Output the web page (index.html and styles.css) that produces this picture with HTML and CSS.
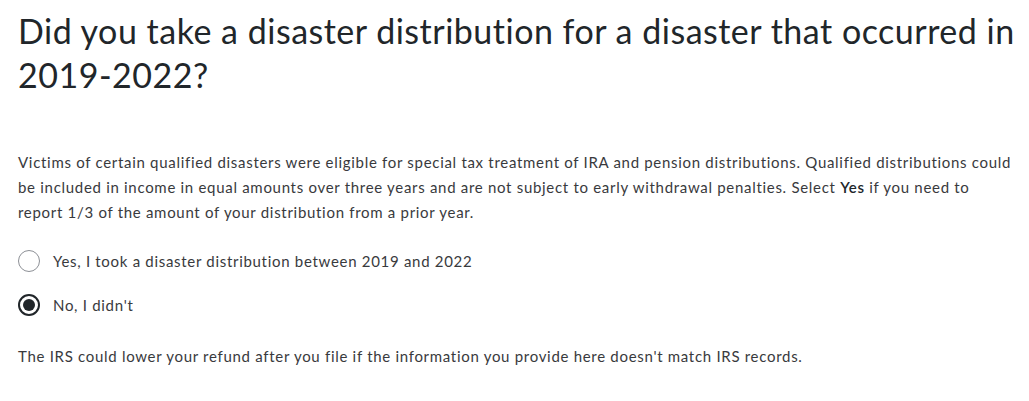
FILE: index.html
```html
<!DOCTYPE html>
<html lang="en">
<head>
    <meta charset="UTF-8">
    <meta name="viewport" content="width=device-width, initial-scale=1.0">
    <title>Disaster distribution</title>
    <link rel="stylesheet" href="styles.css">
</head>
<body>
    <div class="container">
        <h1>Did you take a disaster distribution for a disaster that occurred in 2019-2022?</h1>
        <p class="intro">Victims of certain qualified disasters were eligible for special tax treatment of IRA and pension distributions. Qualified distributions could be included in income in equal amounts over three years and are not subject to early withdrawal penalties. Select <b class="em">Yes</b> if you need to report 1/3 of the amount of your distribution from a prior year.</p>

        <div class="options">
            <label class="option">
                <input type="radio" name="disaster" value="yes">
                <span class="radio"></span>
                <span>Yes, I took a disaster distribution between 2019 and 2022</span>
            </label>
            <label class="option">
                <input type="radio" name="disaster" value="no" checked>
                <span class="radio"></span>
                <span>No, I didn't</span>
            </label>
        </div>

        <p class="note">The IRS could lower your refund after you file if the information you provide here doesn't match IRS records.</p>
    </div>
</body>
</html>
```

FILE: styles.css
```css
body {
    font-family: Lato, "Noto Sans", sans-serif;
    margin: 0;
    padding: 0;
    background-color: #ffffff;
    color: #393a3d;
}
.container {
    padding: 9px 13px 0 18px;
}
h1 {
    font-size: 34px;
    font-weight: 400;
    line-height: 44px;
    letter-spacing: 0.5px;
    color: #21262a;
    margin: 0 0 53px;
}
.intro {
    font-size: 15px;
    line-height: 25px;
    letter-spacing: 0.7px;
    margin: 0 0 25px;
}
.intro .em {
    font-weight: 600;
    color: #21262a;
}
.options {
    display: flex;
    flex-direction: column;
    gap: 22px;
}
.option {
    display: flex;
    align-items: center;
    gap: 13px;
    font-size: 15px;
    letter-spacing: 0.7px;
    cursor: pointer;
}
.option input {
    display: none;
}
.radio {
    width: 22px;
    height: 22px;
    box-sizing: border-box;
    border: 1px solid #8d9096;
    border-radius: 50%;
    display: flex;
    align-items: center;
    justify-content: center;
}
.option input:checked + .radio {
    border: 2px solid #21262a;
}
.option input:checked + .radio::after {
    content: "";
    width: 12px;
    height: 12px;
    border-radius: 50%;
    background-color: #21262a;
}
.note {
    font-size: 15px;
    line-height: 25px;
    letter-spacing: 0.7px;
    margin: 28px 0 0;
}
```
